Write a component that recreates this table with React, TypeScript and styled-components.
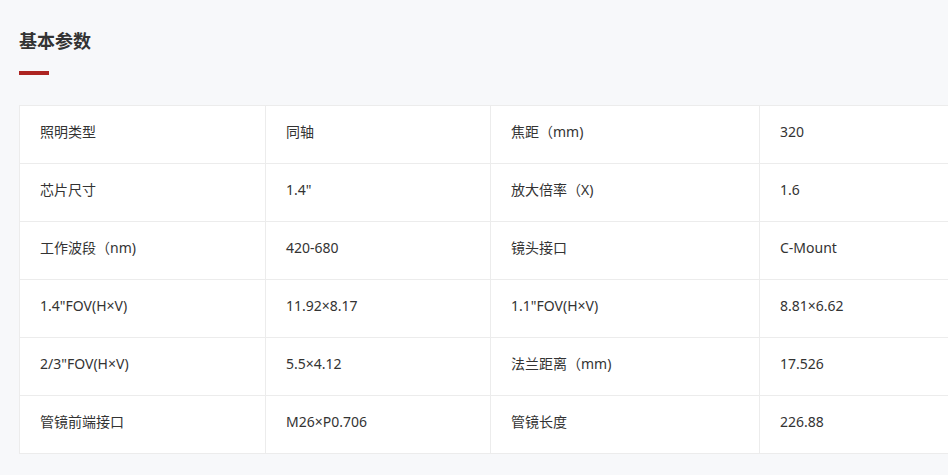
import styled, { createGlobalStyle } from 'styled-components';

const GlobalStyle = createGlobalStyle`
    html, body {
        margin: 0;
        padding: 0;
        background: #f7f8fa;
        overflow: hidden;
    }
    body {
        font-family: "Noto Sans", "Noto Sans CJK SC", sans-serif;
        color: #333;
    }
`;

const specs: [string, string, string, string][] = [
    ['照明类型', '同轴', '焦距（mm)', '320'],
    ['芯片尺寸', '1.4"', '放大倍率（X)', '1.6'],
    ['工作波段（nm)', '420-680', '镜头接口', 'C-Mount'],
    ['1.4"FOV(H×V)', '11.92×8.17', '1.1"FOV(H×V)', '8.81×6.62'],
    ['2/3"FOV(H×V)', '5.5×4.12', '法兰距离（mm)', '17.526'],
    ['管镜前端接口', 'M26×P0.706', '管镜长度', '226.88'],
];

const colWidths = [246, 225, 269, 246];

const App = () => (
    <>
        <GlobalStyle />
        <SpecSection>
            <SectionTitle>基本参数</SectionTitle>
            <TitleBar />
            <SpecTable>
                <colgroup>
                    {colWidths.map((w, i) => (
                        <col key={i} width={w} />
                    ))}
                </colgroup>
                <tbody>
                    {specs.map((row, r) => (
                        <tr key={r}>
                            {row.map((cell, c) => (
                                <SpecCell key={c}>{cell}</SpecCell>
                            ))}
                        </tr>
                    ))}
                </tbody>
            </SpecTable>
        </SpecSection>
    </>
);

export default App;

const SpecSection = styled.section`
    width: 1100px;
    padding: 27px 0 0 19px;
    display: flex;
    flex-direction: column;
    align-items: flex-start;
`;

const SectionTitle = styled.h2`
    margin: 0;
    font-family: "Noto Sans CJK SC", sans-serif;
    font-size: 18px;
    line-height: 26px;
    font-weight: 700;
    color: #333;
`;

const TitleBar = styled.div`
    width: 30px;
    height: 4px;
    margin-top: 18px;
    background: #ad2421;
`;

const SpecTable = styled.table`
    margin-top: 30px;
    width: 986px;
    table-layout: fixed;
    border-collapse: collapse;
    background: #fff;
    border: 1px solid #ececec;
`;

const SpecCell = styled.td`
    height: 58px;
    padding: 0 20px 5px;
    box-sizing: border-box;
    border: 1px solid #ececec;
    font-size: 14px;
    line-height: 20px;
    color: #333;
    white-space: nowrap;
`;
